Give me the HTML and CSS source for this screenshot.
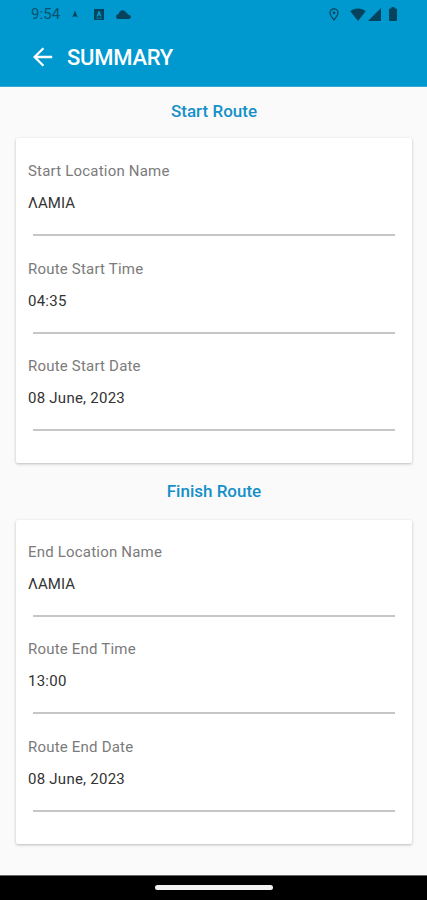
FILE: index.html
```html
<!DOCTYPE html>
<html lang="en">
  <head>
    <meta charset="utf-8">
    <title>Summary</title>
    <link rel="stylesheet" href="styles.css">
  </head>
  <body>
    <header>
      <div class="statusbar">
        <span class="clock">9:54</span>
        <svg class="icon-nav" width="6" height="8" viewBox="0 0 6 8"><path d="M3 0.5L5.8 7.5L4.2 6.5H1.8L0.2 7.5Z"/></svg>
        <svg class="icon-app" width="10" height="11" viewBox="0 0 10 11"><path fill-rule="evenodd" d="M0 0H10V11H0ZM4.5 2L2.5 7.5H4L5 5.5L6 7.5H7.5L5.5 2ZM2 8.7V9.5H8V8.7Z"/></svg>
        <svg class="icon-cloud" width="15" height="9" viewBox="0 0 15 9"><path d="M3 9C-.8 9-.8 4.6 2.6 4C3.3 0 8.2-1.2 10 2.4C11.2 2.7 11.6 3.6 11.8 4.6C15.8 4.8 15.6 9 12.5 9Z"/></svg>
        <span class="spacer"></span>
        <svg class="icon-pin" width="10" height="13" viewBox="0 0 10 13"><path class="outline" d="M5 12C3 9.3 1 7.2 1 4.8A4 4 0 0 1 9 4.8C9 7.2 7 9.3 5 12Z"/><circle cx="5" cy="4.8" r="1.4"/></svg>
        <svg class="icon-wifi" width="16" height="13" viewBox="0 0 16 13"><path d="M8 13L0.3 3.2C4.5-.5 11.5-.5 15.7 3.2Z"/></svg>
        <svg class="icon-signal" width="13" height="13" viewBox="0 0 13 13"><path d="M13 0V13H0Z"/></svg>
        <svg class="icon-battery" width="8" height="14" viewBox="0 0 8 14"><path d="M2.5 0H5.5V1.5H7Q8 1.5 8 2.5V13Q8 14 7 14H1Q0 14 0 13V2.5Q0 1.5 1 1.5H2.5Z"/></svg>
      </div>
      <div class="toolbar">
        <svg class="back" width="20" height="20" viewBox="0 0 20 20"><path d="M19.2 10H2M10.4 1.2L1.6 10L10.4 18.8"/></svg>
        <h1>SUMMARY</h1>
      </div>
    </header>
    <main>
      <h2>Start Route</h2>
      <section class="card">
        <div class="field">
          <label>Start Location Name</label>
          <p class="greek">ΛΑΜΙΑ</p>
        </div>
        <div class="field">
          <label>Route Start Time</label>
          <p>04:35</p>
        </div>
        <div class="field">
          <label>Route Start Date</label>
          <p>08 June, 2023</p>
        </div>
      </section>
      <h2 class="finish">Finish Route</h2>
      <section class="card card-end">
        <div class="field">
          <label>End Location Name</label>
          <p class="greek">ΛΑΜΙΑ</p>
        </div>
        <div class="field">
          <label>Route End Time</label>
          <p>13:00</p>
        </div>
        <div class="field">
          <label>Route End Date</label>
          <p>08 June, 2023</p>
        </div>
      </section>
    </main>
    <footer><div class="handle"></div></footer>
  </body>
</html>
```

FILE: styles.css
```css
* {
  box-sizing: border-box;
}
body {
  margin: 0;
  height: 900px;
  display: flex;
  flex-direction: column;
  font-family: Roboto, sans-serif;
  background-color: #fafafa;
  overflow: hidden;
}
header {
  height: 87px;
  background-color: #0099cf;
  border-bottom: 1px solid #3aa9d4;
}
.statusbar {
  display: flex;
  align-items: center;
  height: 28px;
  padding: 0 30px 0 31px;
  color: #07536f;
  fill: #05445c;
}
.clock {
  width: 30px;
  font-size: 15px;
  letter-spacing: 0.1px;
}
.icon-nav {
  margin-left: 11px;
}
.icon-app {
  margin-left: 16px;
}
.icon-cloud {
  margin-left: 12px;
}
.spacer {
  flex: 1;
}
.outline {
  fill: none;
  stroke: #05445c;
  stroke-width: 1.2;
}
.icon-wifi {
  margin-left: 11px;
}
.icon-signal {
  margin-left: 2px;
}
.icon-battery {
  margin-left: 8px;
}
.toolbar {
  display: flex;
  align-items: center;
  height: 58px;
  padding-left: 33px;
}
.back {
  fill: none;
  stroke: #fff;
  stroke-width: 2.3;
}
h1 {
  margin: 0 0 0 14px;
  font-size: 22px;
  font-weight: 500;
  letter-spacing: -0.25px;
  color: #fff;
}
main {
  flex: 1;
  padding: 0 15px 0 16px;
}
h2 {
  margin: 0;
  height: 51px;
  padding-top: 4px;
  line-height: 40px;
  font-size: 17px;
  font-weight: 500;
  text-align: center;
  color: #1590c8;
}
.finish {
  height: 57px;
  padding-top: 8px;
}
.card {
  height: 325px;
  padding: 0 12px;
  background-color: #fff;
  border-radius: 2px;
  box-shadow: 0 1px 3px rgba(0, 0, 0, 0.25);
}
.card-end {
  height: 324px;
}
.field {
  height: 97.5px;
  padding-top: 24px;
}
.card-end .field {
  padding-top: 22.5px;
}
.field label {
  display: block;
  line-height: 18px;
  font-size: 15px;
  letter-spacing: 0.2px;
  color: #7b7b7b;
}
.field p {
  margin: 14px 5px 0;
  height: 42px;
  line-height: 18px;
  font-size: 15px;
  letter-spacing: 0.25px;
  text-indent: -5px;
  color: #333;
  border-bottom: 2px solid #c6c6c6;
}
.field .greek {
  letter-spacing: 0.1px;
}
footer {
  display: flex;
  justify-content: center;
  height: 25px;
  padding-top: 9px;
  background-color: #000;
  border-top: 1px solid #666;
}
.handle {
  width: 118px;
  height: 5px;
  border-radius: 3px;
  background-color: #f2f2f2;
}
```
